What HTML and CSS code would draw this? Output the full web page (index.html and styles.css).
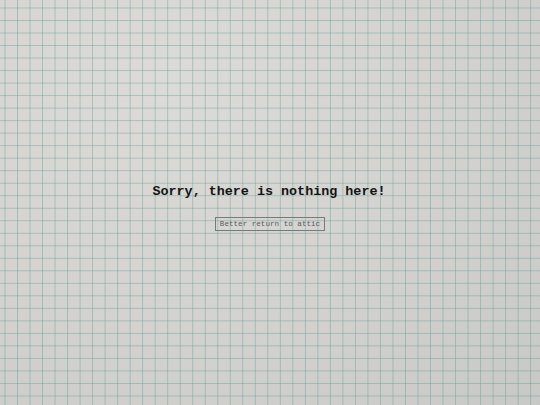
FILE: index.html
```html
<!DOCTYPE html>
<html lang="en">
<head>
<meta charset="utf-8">
<title>Nothing here</title>
<link rel="stylesheet" href="styles.css">
</head>
<body>
<main class="page">
  <h1 class="title">Sorry, there is nothing here!</h1>
  <a class="back" href="#">Better return to attic</a>
</main>
</body>
</html>
```
FILE: styles.css
```css
html, body {
  margin: 0;
  padding: 0;
  height: 100%;
}
body {
  background-color: #d3d2cf;
  background-image:
    linear-gradient(to right, rgba(95, 155, 150, 0.42) 0, rgba(95, 155, 150, 0.42) 1.3px, transparent 1.3px),
    linear-gradient(to bottom, rgba(95, 155, 150, 0.42) 0, rgba(95, 155, 150, 0.42) 1.3px, transparent 1.3px),
    radial-gradient(ellipse at 30% 20%, #dddbd7 0%, #d3d2cf 55%, #c8c8c6 100%);
  background-size: 12.52px 12.52px, 12.52px 12.52px, 100% 100%;
  background-position: 4.5px 0, 0 7.5px, 0 0;
  font-family: "Liberation Mono", "Courier New", monospace;
}
.page {
  height: 100%;
  display: flex;
  flex-direction: column;
  align-items: center;
  justify-content: center;
  box-sizing: border-box;
  padding-top: 10px;
}
.title {
  margin: 0 0 0 -2px;
  font-size: 13.4px;
  font-weight: bold;
  color: #141414;
  line-height: 16px;
}
.back {
  margin-top: 17px;
  display: inline-block;
  font-size: 7.6px;
  line-height: 12px;
  padding: 0 4px;
  color: #5a5a5a;
  text-decoration: none;
  border: 1px solid #7a7a7a;
}
```
